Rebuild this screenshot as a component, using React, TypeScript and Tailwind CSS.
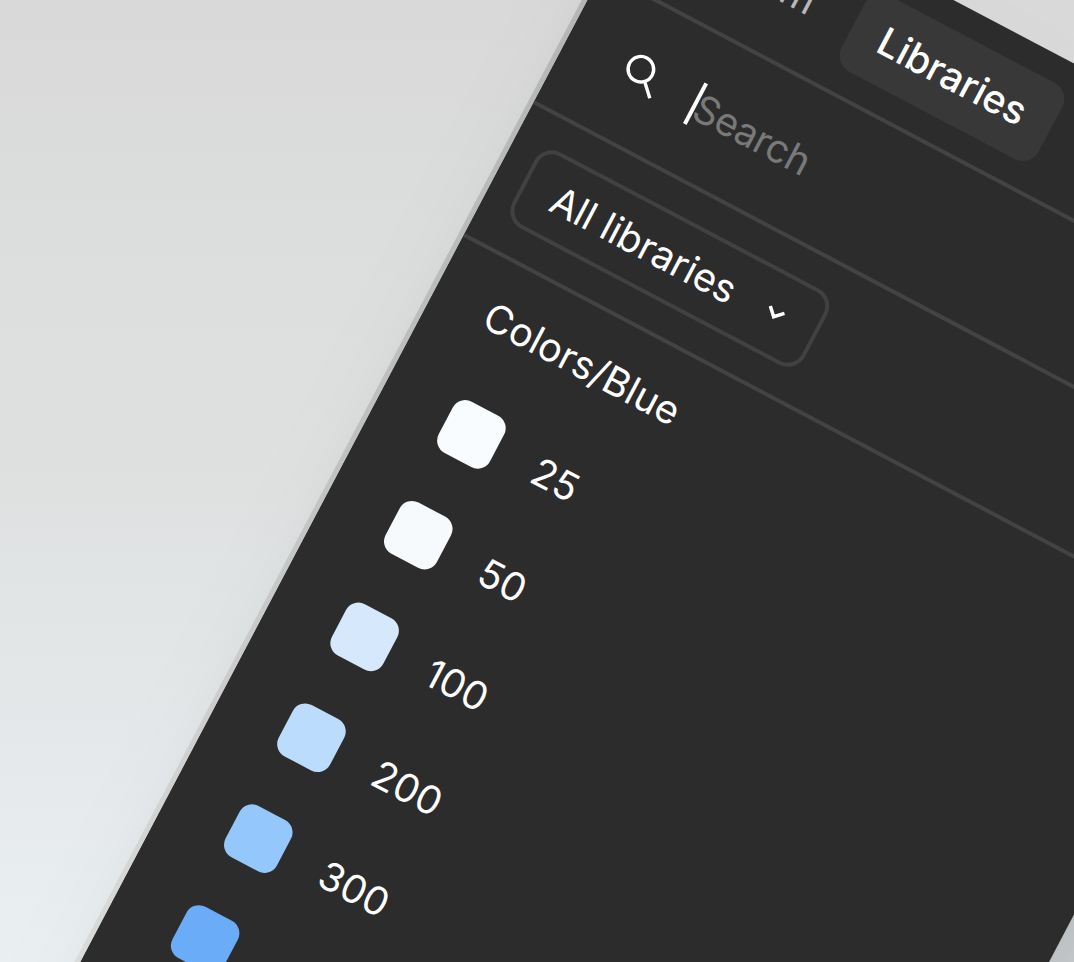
const swatches = [
  { name: "25", color: "bg-[#f8fcff]" },
  { name: "50", color: "bg-[#f6fafd]" },
  { name: "100", color: "bg-[#d5e8fc]" },
  { name: "200", color: "bg-[#bcdcfe]" },
  { name: "300", color: "bg-[#94c7fb]" },
  { name: "400", color: "bg-[#6aacf7]" },
];

function Tabs() {
  return (
    <div className="flex h-[141px] items-center gap-[14px] border-b-4 border-[#434343] pl-[28px]">
      <button className="flex h-[86px] w-[205px] items-center justify-center whitespace-nowrap text-[39.25px] text-[#b8b8b8]">
        Custom
      </button>
      <button className="flex h-[86px] w-[223px] items-center justify-center whitespace-nowrap rounded-[18px] bg-[#383838] text-[39.25px] font-medium tracking-[-0.1px] text-white">
        Libraries
      </button>
    </div>
  );
}

function SearchField() {
  return (
    <div className="flex h-[146.8px] items-center border-b-4 border-[#434343] pl-[56px]">
      <svg
        width="57"
        height="57"
        viewBox="0 0 57 57"
        fill="none"
        stroke="white"
        strokeWidth="3.4"
      >
        <circle cx="23.6" cy="23" r="12.8" />
        <path d="M32.6 32 45 44.4" />
      </svg>
      <div className="ml-[29px] h-[46px] w-[4px] bg-white" />
      <span className="-ml-[1px] text-[39.25px] leading-none tracking-[-0.6px] text-[#797979]">
        Search
      </span>
    </div>
  );
}

function LibraryFilter() {
  return (
    <div className="flex h-[150.3px] items-center border-b-4 border-[#434343] pl-[28px]">
      <button className="flex h-[86px] w-[330.5px] items-center justify-between whitespace-nowrap rounded-[20px] border-4 border-[#414141] pl-[30px] pr-[33px] text-[39.25px] tracking-[-0.1px] text-white">
        All libraries
        <svg
          width="19"
          height="13"
          viewBox="0 0 19 13"
          fill="none"
          stroke="white"
          strokeWidth="3.5"
        >
          <path d="M1.5 2 9.5 10l8-8" />
        </svg>
      </button>
    </div>
  );
}

function ColorList() {
  return (
    <div className="text-[39.25px] leading-none text-white">
      <h2 className="flex h-[114px] items-center pl-[57px]">Colors/Blue</h2>
      <ul>
        {swatches.map((swatch) => (
          <li
            key={swatch.name}
            className="flex h-[114.2px] items-center gap-[43px] pl-[70.5px]"
          >
            <span className={`size-[58px] rounded-[14px] ${swatch.color}`} />
            {swatch.name}
          </li>
        ))}
      </ul>
    </div>
  );
}

export default function App() {
  return (
    <main className="relative h-[962px] w-[1074px] overflow-hidden bg-linear-to-b from-[#d9d9d9] via-[#dfe1e1] to-[#eaeff2] font-['Inter',sans-serif]">
      <section className="absolute left-[666.9px] top-[-151.4px] h-[1700px] w-[856.5px] origin-top-left rotate-[27.8deg] bg-[#2c2c2c] shadow-[90px_130px_110px_rgba(0,0,0,0.17),20px_60px_120px_rgba(0,0,0,0.05)]">
        {/* lit rim along the left side */}
        <div className="absolute left-[-5px] top-[12px] h-[1300px] w-[5px] bg-linear-to-b from-[#b0b2b3] via-[#bfc1c1] to-[#dcdddd]" />
        <Tabs />
        <SearchField />
        <LibraryFilter />
        <ColorList />
      </section>
    </main>
  );
}
